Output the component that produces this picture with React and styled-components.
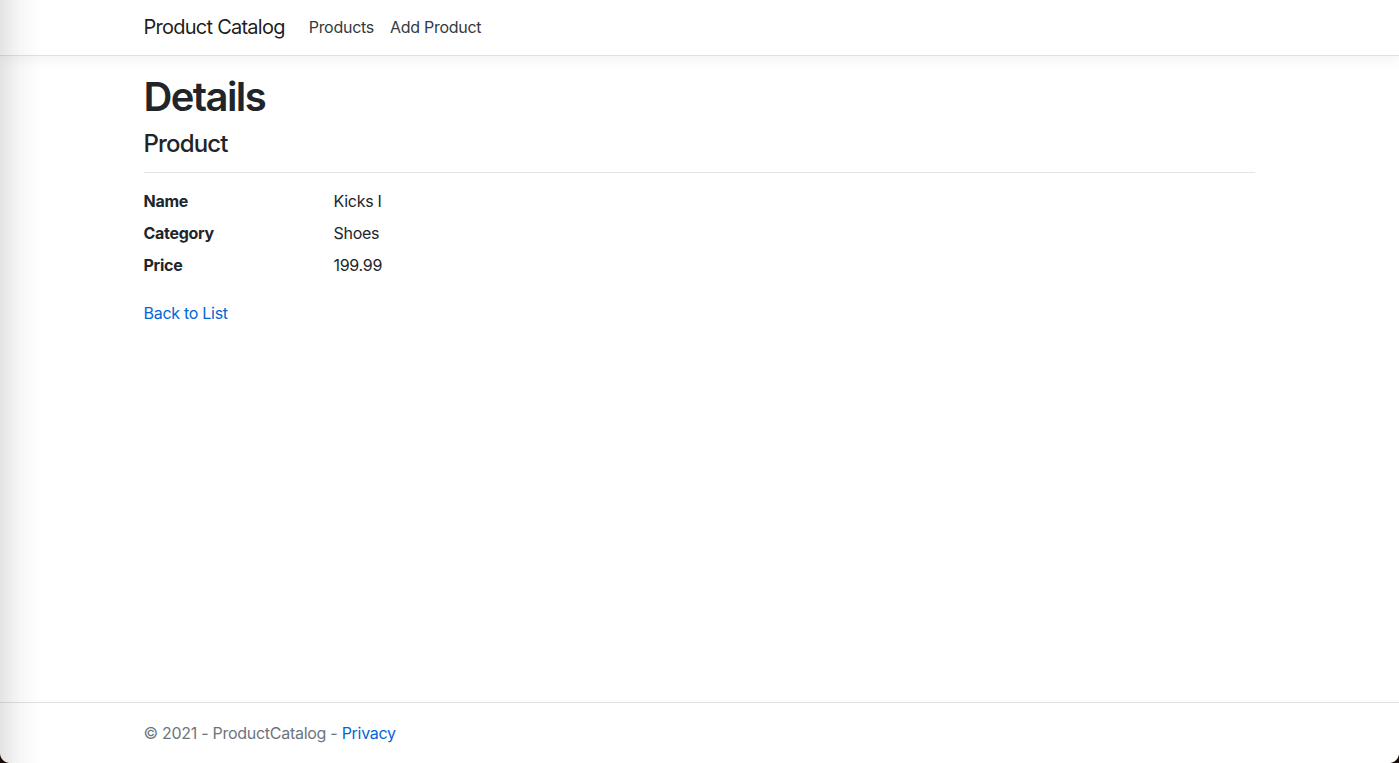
import styled, { createGlobalStyle } from 'styled-components';

const GlobalStyle = createGlobalStyle`
    *, *::before, *::after {
        box-sizing: border-box;
    }
    html, body {
        margin: 0;
        padding: 0;
        font-size: 16px;
    }
    body {
        font-family: Inter, "Noto Sans", "Liberation Sans", sans-serif;
        color: #212529;
        background: #fff;
        line-height: 1.5;
        letter-spacing: -0.28px;
    }
`

const Page = styled.div`
    display: flex;
    flex-direction: column;
    min-height: 100vh;
`
const Container = styled.div`
    width: 100%;
    max-width: 1140px;
    margin: 0 auto;
    padding: 0 15px 0 14px;
`
const Header = styled.header`
    background: #fff;
    border-bottom: 1px solid #dee2e6;
    box-shadow: 0 .25rem .75rem rgba(0, 0, 0, .05);
    margin-bottom: 16px;
`
const Nav = styled.nav`
    display: flex;
    align-items: center;
    padding: 7px 0 8px;
`
const Brand = styled.a`
    font-size: 20px;
    line-height: 30px;
    padding: 5px 0;
    margin-right: 16px;
    letter-spacing: -0.75px;
    color: rgba(0, 0, 0, .9);
    text-decoration: none;
`
const NavList = styled.ul`
    display: flex;
    list-style: none;
    margin: 0;
    padding: 0;
`
const NavLink = styled.a`
    display: block;
    padding: 8px;
    color: #343a40;
    text-decoration: none;
`
const Main = styled.main`
    flex: 1;
    padding-bottom: 16px;
`
const Title = styled.h1`
    font-size: 40px;
    font-weight: 600;
    line-height: 1.2;
    letter-spacing: -1.6px;
    padding-top: 1px;
    margin: 0 0 8px;
`
const Subtitle = styled.h4`
    font-size: 24px;
    font-weight: 500;
    line-height: 1.2;
    letter-spacing: -0.85px;
    padding-top: 1px;
    margin: 0 0 8px;
`
const Rule = styled.hr`
    border: 0;
    border-top: 1px solid rgba(0, 0, 0, .1);
    margin: 13px 0 16px;
`
const DetailList = styled.dl`
    display: grid;
    grid-template-columns: 190px 1fr;
    margin: 0 0 16px;
`
const Term = styled.dt`
    font-weight: 700;
    margin-bottom: 8px;
`
const Value = styled.dd`
    margin: 0 0 8px;
`
const Link = styled.a`
    color: #0366d6;
    text-decoration: none;
`
const Footer = styled.footer`
    border-top: 1px solid #dee2e6;
    line-height: 60px;
    white-space: nowrap;
    color: #6c757d;
`
const EdgeShade = styled.div`
    position: fixed;
    top: 0;
    bottom: 0;
    left: 0;
    width: 40px;
    pointer-events: none;
    background: linear-gradient(to right, rgba(0, 0, 0, .11), rgba(0, 0, 0, .04) 45%, rgba(0, 0, 0, 0));
`
const Corner = styled.div`
    position: fixed;
    bottom: 0;
    ${p => p.$side}: 0;
    width: 10px;
    height: 10px;
    pointer-events: none;
    background: radial-gradient(circle at ${p => p.$side === 'left' ? '100% 0' : '0 0'}, transparent 9.5px, #1c0b0b 10.5px);
`

const product = [
    ['Name', 'Kicks I'],
    ['Category', 'Shoes'],
    ['Price', '199.99'],
]

const App = () => {
    return (
        <Page>
            <GlobalStyle />
            <Header>
                <Container>
                    <Nav>
                        <Brand href="#">Product Catalog</Brand>
                        <NavList>
                            <li><NavLink href="#">Products</NavLink></li>
                            <li><NavLink href="#">Add Product</NavLink></li>
                        </NavList>
                    </Nav>
                </Container>
            </Header>
            <Main>
                <Container>
                    <Title>Details</Title>
                    <div>
                        <Subtitle>Product</Subtitle>
                        <Rule />
                        <DetailList>
                            {product.map(([k, v]) => [
                                <Term key={k}>{k}</Term>,
                                <Value key={k + '-v'}>{v}</Value>,
                            ])}
                        </DetailList>
                    </div>
                    <div>
                        <Link href="#">Back to List</Link>
                    </div>
                </Container>
            </Main>
            <Footer>
                <Container>
                    &copy; 2021 - ProductCatalog - <Link href="#">Privacy</Link>
                </Container>
            </Footer>
            <EdgeShade />
            <Corner $side="left" />
            <Corner $side="right" />
        </Page>
    )
}

export default App;
